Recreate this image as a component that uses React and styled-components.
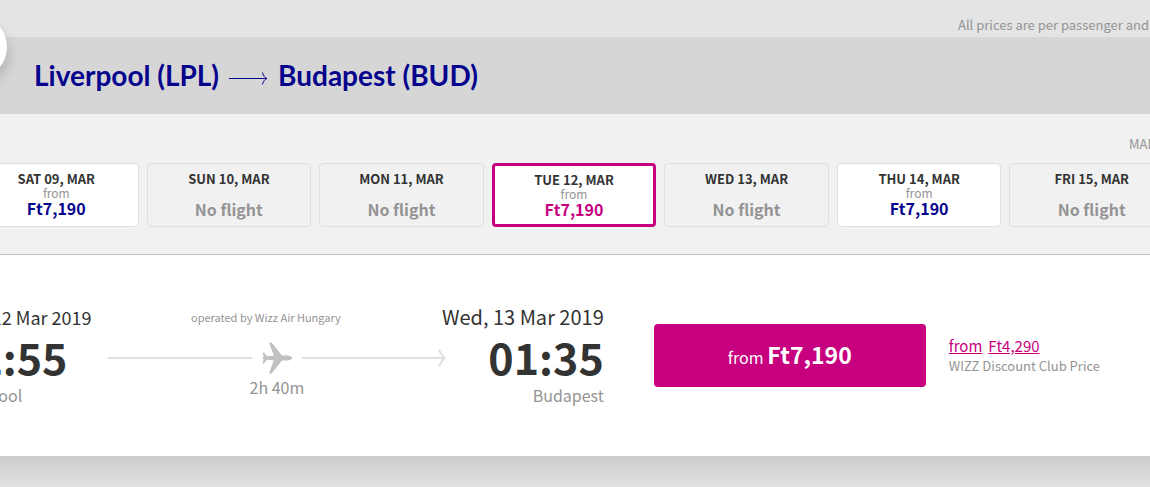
import React from 'react';
import styled, { createGlobalStyle } from 'styled-components';

const GlobalStyle = createGlobalStyle`
  * {
    box-sizing: border-box;
  }

  body {
    margin: 0;
    overflow: hidden;
    background-color: #e4e4e4;
    color: #333333;
    font-family: 'Noto Sans CJK SC', 'Noto Sans', sans-serif;
  }

  h1, p, time {
    margin: 0;
  }

  button {
    font-family: inherit;
    cursor: pointer;
  }
`;

const Page = styled.main`
  position: relative;
  min-height: 100vh;
  display: flex;
  flex-direction: column;
  overflow: hidden;
`;

const Notice = styled.div`
  display: flex;
  justify-content: flex-end;
  height: 37px;
  padding-top: 15px;
  background-color: #e4e4e4;
`;

const NoticeText = styled.p`
  width: 192px;
  color: #949494;
  font-size: 13px;
  line-height: 20px;
  white-space: nowrap;
`;

const RouteBar = styled.header`
  padding: 20px 34px;
  background-color: #d6d6d6;
`;

const RouteTitle = styled.h1`
  display: flex;
  align-items: center;
  gap: 10px;
  color: #06038d;
  font-family: Lato, sans-serif;
  font-size: 28px;
  font-weight: 700;
  line-height: 37px;
  white-space: nowrap;
`;

const RoundButton = styled.button`
  position: absolute;
  top: 15px;
  left: -57px;
  width: 64px;
  height: 64px;
  border: none;
  border-radius: 50%;
  background-color: #ffffff;
  box-shadow: 2px 8px 12px rgba(0, 0, 0, 0.15);
`;

const Calendar = styled.section`
  padding: 20px 0 27px;
  border-bottom: 1px solid #bdbdbd;
  background-color: #f1f1f1;
`;

const MonthRow = styled.div`
  display: flex;
  justify-content: flex-end;
  margin-bottom: 9px;
`;

const Month = styled.p`
  width: 21px;
  color: #949494;
  font-size: 13px;
  line-height: 20px;
  white-space: nowrap;
`;

const Days = styled.div`
  display: grid;
  grid-template-columns: repeat(7, 1fr);
  gap: 8px;
  margin: 0 -24px 0 -26px;
`;

const dayColors = {
  open: '#06038d',
  selected: '#c6007e',
  empty: '#949494',
};

const Day = styled.button`
  display: flex;
  flex-direction: column;
  align-items: center;
  height: 64px;
  padding: ${({ $state }) => ($state === 'selected' ? '5px 0 0' : '6px 0 0')};
  border: ${({ $state }) => ($state === 'selected' ? '3px solid #c6007e' : '1px solid #dfdfdf')};
  border-radius: 4px;
  background-color: ${({ $state }) => ($state === 'empty' ? '#f1f1f1' : '#ffffff')};
  color: ${({ $state }) => dayColors[$state]};
`;

const DayDate = styled.span`
  color: #333333;
  font-size: 13px;
  font-weight: 700;
  line-height: 17px;
`;

const DayFrom = styled.span`
  color: #949494;
  font-size: 12px;
  line-height: 12px;
`;

const DayPrice = styled.span`
  margin-top: ${({ $empty }) => ($empty ? '13px' : '0')};
  font-size: 16px;
  font-weight: 700;
  line-height: 18px;
`;

const Flight = styled.section`
  display: flex;
  padding: 48px 50px 48px 0;
  margin-left: -48px;
  background-color: #ffffff;
`;

const Stop = styled.div`
  flex: none;
  display: flex;
  flex-direction: column;
  align-items: ${({ $end }) => ($end ? 'flex-end' : 'flex-start')};
  width: ${({ $end }) => ($end ? '158px' : '156px')};
  white-space: nowrap;
`;

const StopDate = styled.time`
  font-size: ${({ $large }) => ($large ? '20px' : '18px')};
  line-height: 28px;
`;

const StopTime = styled.time`
  font-size: 43px;
  font-weight: 700;
  line-height: 51px;
`;

const StopCity = styled.p`
  color: #949494;
  font-size: 16px;
  line-height: 26px;
`;

const Journey = styled.div`
  flex: 1;
  display: flex;
  flex-direction: column;
  align-items: center;
  color: #949494;
`;

const Operator = styled.p`
  padding-right: 22px;
  font-size: 11px;
  line-height: 28px;
`;

const Track = styled.div`
  display: flex;
  align-items: center;
  align-self: stretch;
  gap: 10px;
  height: 32px;
  margin-top: 11px;
`;

const Line = styled.span`
  flex: 1;
  height: 2px;
  background-color: #e0e0e0;
`;

const ArrowLine = styled.span`
  flex: 1;
  display: flex;
  align-items: center;
`;

const ArrowTip = styled.svg`
  flex: none;
  margin-left: -8px;
`;

const Duration = styled.p`
  margin-top: 1px;
  font-size: 16px;
  line-height: 24px;
`;

const Offer = styled.div`
  flex: none;
  display: flex;
  align-items: center;
  gap: 23px;
  margin-left: 50px;
`;

const BookButton = styled.button`
  width: 272px;
  height: 63px;
  padding: 0;
  border: none;
  border-radius: 4px;
  background-color: #c6007e;
  color: #ffffff;
  font-size: 16px;
  line-height: 32px;
`;

const BookPrice = styled.strong`
  font-size: 23px;
`;

const Club = styled.div`
  padding-top: 1px;
  color: #949494;
  font-size: 13px;
  line-height: 20px;
  white-space: nowrap;
`;

const ClubPrice = styled.a`
  display: flex;
  gap: 6px;
  color: #c6007e;
  font-size: 15px;
  text-decoration: underline;
`;

const Shade = styled.div`
  flex: 1;
  background: linear-gradient(#cbcbcb, #e2e2e2);
`;

const days = [
  { date: 'SAT 09, MAR', price: 'Ft7,190', state: 'open' },
  { date: 'SUN 10, MAR', state: 'empty' },
  { date: 'MON 11, MAR', state: 'empty' },
  { date: 'TUE 12, MAR', price: 'Ft7,190', state: 'selected' },
  { date: 'WED 13, MAR', state: 'empty' },
  { date: 'THU 14, MAR', price: 'Ft7,190', state: 'open' },
  { date: 'FRI 15, MAR', state: 'empty' },
];

const RouteArrow = () => (
  <svg width="39" height="19" viewBox="0 0 39 19" fill="none" stroke="#06038d" aria-hidden="true">
    <path d="M0 12.5h37.500" />
    <path d="M33.500 6.500c.7 3 2 5 4.500 6-2.500 1-3.800 3-4.500 6" />
  </svg>
);

const Plane = () => (
  <svg width="30" height="32" viewBox="0 0 30 32" fill="#c1c1c1" aria-hidden="true">
    <path d="M7 .5h2.600L20 13.500h5.500c2.200 0 4.500 1.200 4.500 2.500s-2.300 2.500-4.500 2.500H20L9.600 31.500H7l4.800-13.200-6.800-.5L2 21.500H.5L1.700 17 0 16l1.700-1L.5 10.500H2l3 3.700 6.800-.5z" />
  </svg>
);

const App = () => (
  <>
    <GlobalStyle />
    <Page>
      <Notice>
        <NoticeText>All prices are per passenger and</NoticeText>
      </Notice>

      <RouteBar>
        <RouteTitle>
          <span>Liverpool (LPL)</span>
          <RouteArrow />
          <span>Budapest (BUD)</span>
        </RouteTitle>
      </RouteBar>
      <RoundButton type="button" aria-label="Back" />

      <Calendar>
        <MonthRow>
          <Month>MAR</Month>
        </MonthRow>
        <Days>
          {days.map(({ date, price, state }) => (
            <Day key={date} type="button" $state={state}>
              <DayDate>{date}</DayDate>
              {price && <DayFrom>from</DayFrom>}
              <DayPrice $empty={!price}>{price || 'No flight'}</DayPrice>
            </Day>
          ))}
        </Days>
      </Calendar>

      <Flight>
        <Stop>
          <StopDate>Tue, 12 Mar 2019</StopDate>
          <StopTime>22:55</StopTime>
          <StopCity>Liverpool</StopCity>
        </Stop>

        <Journey>
          <Operator>operated by Wizz Air Hungary</Operator>
          <Track>
            <Line />
            <Plane />
            <ArrowLine>
              <Line />
              <ArrowTip width="9" height="20" viewBox="0 0 9 20" fill="none" stroke="#e0e0e0" strokeWidth="2">
                <path d="M2 1.500Q3.500 6.500 7.800 10 3.500 13.500 2 18.500" />
              </ArrowTip>
            </ArrowLine>
          </Track>
          <Duration>2h 40m</Duration>
        </Journey>

        <Stop $end>
          <StopDate $large>Wed, 13 Mar 2019</StopDate>
          <StopTime>01:35</StopTime>
          <StopCity>Budapest</StopCity>
        </Stop>

        <Offer>
          <BookButton type="button">
            from <BookPrice>Ft7,190</BookPrice>
          </BookButton>
          <Club>
            <ClubPrice href="#club">
              <span>from</span>
              <span>Ft4,290</span>
            </ClubPrice>
            <p>WIZZ Discount Club Price</p>
          </Club>
        </Offer>
      </Flight>

      <Shade />
    </Page>
  </>
);

export default App;
